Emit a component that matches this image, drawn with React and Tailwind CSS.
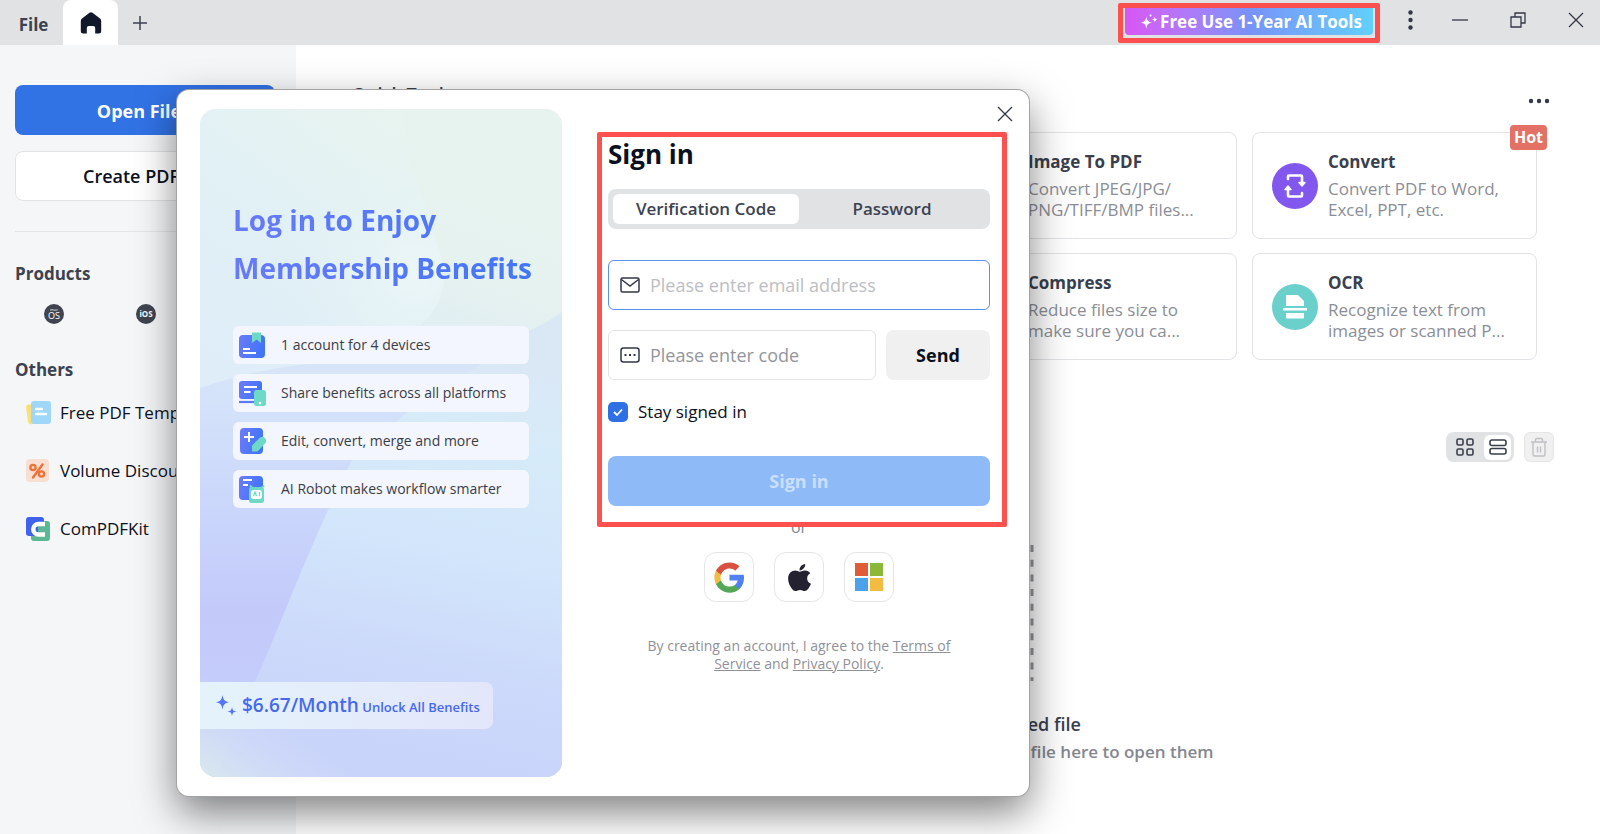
import React from "react";
import { FaApple } from "react-icons/fa";

const CARDS = [
  { title: "Image To PDF", lines: ["Convert JPEG/JPG/", "PNG/TIFF/BMP files..."], place: "col-start-3", tone: "bg-[#4f8df5]", icon: null },
  { title: "Convert", lines: ["Convert PDF to Word,", "Excel, PPT, etc."], place: "col-start-4", tone: "bg-[#8257ee]", icon: ConvertIcon, hot: true },
  { title: "Compress", lines: ["Reduce files size to", "make sure you ca..."], place: "col-start-3", tone: "bg-[#f2a33c]", icon: null },
  { title: "OCR", lines: ["Recognize text from", "images or scanned P..."], place: "col-start-4", tone: "bg-[#69d0cc]", icon: OcrIcon },
];

const OTHERS = [
  { label: "Free PDF Templates", icon: TemplateIcon },
  { label: "Volume Discount", icon: PercentIcon },
  { label: "ComPDFKit", icon: KitIcon },
];

const BENEFITS = [
  { label: "1 account for 4 devices", icon: AccountIcon },
  { label: "Share benefits across all platforms", icon: ShareIcon },
  { label: "Edit, convert, merge and more", icon: EditIcon },
  { label: "AI Robot makes workflow smarter", icon: RobotIcon },
];

function ConvertIcon() {
  return (
    <svg width="26" height="26" viewBox="0 0 26 26" fill="none" stroke="#fff" strokeWidth="2.6" strokeLinejoin="round" strokeLinecap="round">
      <path d="M6 6V3.500a1 1 0 0 1 1-1h12a1 1 0 0 1 1 1V9M20 20v2.500a1 1 0 0 1-1 1H7a1 1 0 0 1-1-1V17" />
      <path d="M17 9.500h6l-3 3.500zM3 16.500h6L6 13z" fill="#fff" strokeWidth="1.500" />
    </svg>
  );
}

function OcrIcon() {
  return (
    <svg width="24" height="24" viewBox="0 0 24 24" fill="#fff">
      <path d="M4 0h11l6 6v5H3V1a1 1 0 0 1 1-1zM0 13h24v2.500H0zM3 18h18v4.500a1 1 0 0 1-1 1H4a1 1 0 0 1-1-1z" />
    </svg>
  );
}

function TemplateIcon() {
  return (
    <svg width="26" height="24" viewBox="0 0 26 24">
      <rect x="2" y="3" width="13" height="20" rx="3" fill="#f9df7b" transform="rotate(-8 8 13)" />
      <rect x="6" y="0" width="20" height="23" rx="3" fill="#9fd7f8" />
      <path d="M11 8h6M11 13h10" stroke="#fff" strokeWidth="2.400" strokeLinecap="round" />
    </svg>
  );
}

function PercentIcon() {
  return (
    <svg width="26" height="24" viewBox="0 0 26 24">
      <rect x="1" y="0" width="23" height="23" rx="4" fill="#f9dfd2" />
      <g fill="none" stroke="#ee7138" strokeWidth="2.400">
        <circle cx="8" cy="8.500" r="2.600" />
        <circle cx="16.500" cy="15" r="2.600" />
        <path d="M17.500 5.500l-9.500 13" strokeLinecap="round" />
      </g>
    </svg>
  );
}

function KitIcon() {
  return (
    <svg width="26" height="24" viewBox="0 0 26 24">
      <rect x="1" y="0" width="18" height="19" rx="3" fill="#3f62ec" />
      <path d="M19 4h3a3 3 0 0 1 3 3v14a3 3 0 0 1-3 3H9a3 3 0 0 1-3-3v-2h13z" fill="#5cb795" />
      <path d="M13 8.500h8v7h-8z" fill="#5cb795" />
      <path d="M20 7h-6.500a5 5 0 0 0 0 10.500H20" fill="none" stroke="#fff" strokeWidth="4.500" />
    </svg>
  );
}

function IconGradient({ id }) {
  return (
    <linearGradient id={id} x1="0" x2="1" y1="0" y2="0.3">
      <stop offset="0" stopColor="#6b7cfa" />
      <stop offset="1" stopColor="#4274f8" />
    </linearGradient>
  );
}

function AccountIcon() {
  return (
    <svg width="28" height="28" viewBox="0 0 28 28">
      <defs><IconGradient id="ga" /></defs>
      <rect x="0" y="4" width="26" height="23" rx="4" fill="url(#ga)" />
      <path d="M13 1.500h9v10.500l-4.500-3.500L13 12z" fill="#6fd9c8" />
      <path d="M4 18h7M4 22h13" stroke="#fff" strokeWidth="1.800" />
    </svg>
  );
}

function ShareIcon() {
  return (
    <svg width="28" height="28" viewBox="0 0 28 28">
      <defs><IconGradient id="gs" /></defs>
      <rect x="0" y="2" width="23" height="18" rx="3" fill="url(#gs)" />
      <path d="M0 23h17" stroke="#5a78fa" strokeWidth="2.200" />
      <path d="M5 8h13M5 13h6.500" stroke="#fff" strokeWidth="1.800" />
      <rect x="15" y="11" width="12" height="16" rx="2.500" fill="#6fd9c8" />
      <circle cx="21" cy="24" r="1.300" fill="#fff" />
    </svg>
  );
}

function EditIcon() {
  return (
    <svg width="28" height="28" viewBox="0 0 28 28">
      <defs><IconGradient id="ge" /></defs>
      <rect x="1" y="1" width="23" height="26" rx="4" fill="url(#ge)" />
      <path d="M10 5v10M5 10h10" stroke="#fff" strokeWidth="2" />
      <path d="M13 18.500l8-8a4 4 0 0 1 5.500 5.500l-8 8.500H13z" fill="#6fd9c8" />
    </svg>
  );
}

function RobotIcon() {
  return (
    <svg width="28" height="28" viewBox="0 0 28 28">
      <defs><IconGradient id="gr" /></defs>
      <rect x="0" y="1" width="24" height="24" rx="4" fill="url(#gr)" />
      <path d="M4 5h9M4 10h5" stroke="#fff" strokeWidth="1.800" />
      <path d="M11 10.500l3 3M25 10.500l-3 3" stroke="#6fd9c8" strokeWidth="1.800" />
      <rect x="10" y="12" width="15" height="16" rx="2.500" fill="#6fd9c8" />
      <rect x="12" y="15" width="11" height="9" rx="3" fill="#fff" />
      <path d="M14.500 21l1.500-4 1.500 4M20.500 17v4" stroke="#6fd9c8" strokeWidth="1.300" fill="none" />
    </svg>
  );
}

function GoogleIcon() {
  return (
    <svg width="33" height="33" viewBox="0 0 24 24">
      <path fill="#4f82f0" d="M22.560 12.250c0-.78-.07-1.530-.2-2.250H12v4.260h5.920c-.26 1.370-1.040 2.530-2.210 3.310v2.770h3.570c2.080-1.920 3.280-4.740 3.280-8.090z" />
      <path fill="#54a757" d="M12 23c2.970 0 5.460-.98 7.280-2.660l-3.570-2.770c-.98.660-2.230 1.060-3.710 1.060-2.860 0-5.290-1.930-6.160-4.530H2.180v2.840C3.990 20.530 7.700 23 12 23z" />
      <path fill="#f2bd42" d="M5.840 14.090c-.22-.66-.35-1.360-.35-2.090s.13-1.430.35-2.090V7.070H2.180C1.430 8.550 1 10.220 1 12s.43 3.450 1.180 4.930l3.660-2.840z" />
      <path fill="#d85140" d="M12 5.380c1.620 0 3.060.56 4.210 1.640l3.150-3.150C17.450 2.090 14.970 1 12 1 7.700 1 3.990 3.470 2.180 7.070l3.660 2.840c.87-2.600 3.300-4.530 6.160-4.530z" />
    </svg>
  );
}

function MicrosoftIcon() {
  return (
    <svg width="28" height="28" viewBox="0 0 28 28">
      <path d="M0 0h13v13H0z" fill="#e05c38" />
      <path d="M15 0h13v13H15z" fill="#8bb839" />
      <path d="M0 15h13v13H0z" fill="#4ba2ea" />
      <path d="M15 15h13v13H15z" fill="#f2bb41" />
    </svg>
  );
}

function CloseIcon() {
  return (
    <svg width="16" height="16" viewBox="0 0 16 16" stroke="#333846" strokeWidth="1.300">
      <path d="M1 1l14 14M15 1L1 15" />
    </svg>
  );
}

function PromoBackground() {
  return (
    <svg className="absolute inset-0 h-full w-full" viewBox="0 0 362 668" preserveAspectRatio="none" aria-hidden="true">
      <defs>
        <linearGradient id="base" x1="0.700" y1="0" x2="0.500" y2="1">
          <stop offset="0" stopColor="#e6f3ee" />
          <stop offset="0.220" stopColor="#e6f2ef" />
          <stop offset="0.380" stopColor="#deecf5" />
          <stop offset="1" stopColor="#ccd6f9" />
        </linearGradient>
        <linearGradient id="leaf" x1="0.900" y1="0" x2="0.300" y2="1">
          <stop offset="0" stopColor="#e8f4ee" />
          <stop offset="0.450" stopColor="#e2f1f4" />
          <stop offset="1" stopColor="#deedf8" />
        </linearGradient>
        <radialGradient id="glow" cx="215" cy="165" r="120" gradientUnits="userSpaceOnUse">
          <stop offset="0" stopColor="#edf7f8" stopOpacity="0.800" />
          <stop offset="1" stopColor="#e6f3f7" stopOpacity="0" />
        </radialGradient>
        <linearGradient id="wave" x1="0" y1="200" x2="0" y2="668" gradientUnits="userSpaceOnUse">
          <stop offset="0" stopColor="#dae7f5" />
          <stop offset="0.180" stopColor="#d5e3fa" />
          <stop offset="0.450" stopColor="#c9d5fb" />
          <stop offset="0.650" stopColor="#c3cafa" />
          <stop offset="0.800" stopColor="#c4ccfa" />
          <stop offset="1" stopColor="#cfdbf7" />
        </linearGradient>
        <linearGradient id="lower" x1="280" y1="250" x2="200" y2="640" gradientUnits="userSpaceOnUse">
          <stop offset="0" stopColor="#dae8f6" />
          <stop offset="0.200" stopColor="#d6ebf9" />
          <stop offset="0.500" stopColor="#d2e5fb" />
          <stop offset="0.800" stopColor="#ccd9fa" />
          <stop offset="1" stopColor="#c9d4fa" />
        </linearGradient>
        <linearGradient id="corner" x1="0" y1="1" x2="0.500" y2="0.500">
          <stop offset="0" stopColor="#d9e8ee" />
          <stop offset="1" stopColor="#d1dcf9" stopOpacity="0" />
        </linearGradient>
      </defs>
      <path d="M0 0h362v668H0z" fill="url(#base)" />
      <path d="M0 0h204c0 45 16 75 29 121 10 35 24 60-13 96L0 300z" fill="url(#leaf)" />
      <path d="M204 0c0 45 16 75 29 121 10 35 24 60-13 96L60 300V60z" fill="url(#glow)" />
      <path d="M0 279c70-24 120-26 190-29 80-4 135-20 172-47v465H0z" fill="url(#wave)" />
      <path d="M362 203c-70 50-130 77-165 109-26 15-37 23-47 43-40 80-65 150-95 218q-15 40-40 95h347z" fill="url(#lower)" />
      <path d="M0 560h160v108H0z" fill="url(#corner)" />
    </svg>
  );
}

function TitleBar() {
  return (
    <header className="flex h-[45px] items-stretch bg-[#e1e2e4] text-[#3d4250]">
      <button className="w-[63px] pt-1 pl-1 text-[17px] font-bold">File</button>
      <button className="grid w-[55px] place-items-center rounded-t-lg bg-white" aria-label="Home">
        <svg width="24" height="24" viewBox="0 0 24 24" fill="#12172a">
          <path d="M10.500 1.800a2.500 2.500 0 0 1 3 0l7.500 5.700a3 3 0 0 1 1.200 2.400V20a2.500 2.500 0 0 1-2.500 2.500h-3.500V17a2 2 0 0 0-2-2h-4.400a2 2 0 0 0-2 2v5.500H4.300A2.500 2.500 0 0 1 1.800 20V9.900A3 3 0 0 1 3 7.500z" />
        </svg>
      </button>
      <button className="grid w-[44px] place-items-center" aria-label="New tab">
        <svg width="14" height="14" viewBox="0 0 14 14" stroke="#3d4250" strokeWidth="1.500"><path d="M7 0v14M0 7h14" /></svg>
      </button>

      <div className="ml-auto flex items-start">
        <div className="mt-[3px] h-10 w-[262px] rounded-xs border-5 border-[#fb504f] px-0.5">
          <button className="flex h-[27px] w-full items-center justify-center gap-0.5 rounded-b-sm bg-linear-to-r from-[#d855f5] via-[#7792f8] via-50% to-[#60d0fb] pl-1 text-[17px] font-bold whitespace-nowrap text-white">
            <svg width="18" height="16" viewBox="0 0 17 15" fill="#fff">
              <path d="M6 2.500c.7 3.700 1.600 4.800 5.500 5.500C7.600 8.700 6.700 9.800 6 14 5.300 9.800 4.400 8.700.5 8 4.400 7.300 5.300 6.200 6 2.500zM14 2.500c.3 1.800.9 2.300 2.800 2.700-1.900.4-2.500.9-2.800 2.800-.3-1.900-.9-2.400-2.800-2.800 1.900-.4 2.500-.9 2.800-2.700z" />
              <circle cx="10" cy="1.300" r="1" />
            </svg>
            Free Use 1-Year AI Tools
          </button>
        </div>
        <div className="flex h-10 items-center pr-4">
          <button className="grid w-15 place-items-center" aria-label="More">
            <svg width="5" height="20" viewBox="0 0 5 20" fill="#333846"><circle cx="2.500" cy="2.500" r="2.200" /><circle cx="2.500" cy="10" r="2.200" /><circle cx="2.500" cy="17.500" r="2.200" /></svg>
          </button>
          <button className="grid w-10 place-items-center" aria-label="Minimize">
            <svg width="16" height="2" viewBox="0 0 16 2"><path d="M0 1h16" stroke="#333846" strokeWidth="1.300" /></svg>
          </button>
          <button className="ml-4.5 grid w-10 place-items-center" aria-label="Restore">
            <svg width="16" height="16" viewBox="0 0 16 16" fill="none" stroke="#333846" strokeWidth="1.300">
              <path d="M1 5h10v10H1zM5 5V1h10v10h-4" />
            </svg>
          </button>
          <button className="ml-[30px] grid w-4 place-items-center" aria-label="Close window"><CloseIcon /></button>
        </div>
      </div>
    </header>
  );
}

function Sidebar() {
  return (
    <aside className="w-[296px] shrink-0 bg-[#f5f6f8] px-[15px] pt-10 text-[#0b1020]">
      <button className="h-[50px] w-[260px] rounded-lg bg-[#3172e5] pt-0.5 pr-3 text-lg font-bold text-white">Open File</button>
      <button className="mt-4 h-[50px] w-[260px] rounded-lg border border-[#e2e3e6] bg-white pr-7 text-lg font-semibold">Create PDF</button>
      <hr className="mt-7.5 border-[#e4e5e8]" />
      <h2 className="mt-7 text-[17px]/7 font-bold text-[#3d4250]">Products</h2>
      <div className="mt-4 flex gap-18 pl-[29px]">
        <svg width="20" height="20" viewBox="0 0 20 20" role="img" aria-label="macOS">
          <circle cx="10" cy="10" r="10" fill="#40444f" />
          <text x="10" y="7" textAnchor="middle" fontSize="4" fill="#fff">mac</text>
          <text x="10" y="15" textAnchor="middle" fontSize="9" fill="#fff">OS</text>
        </svg>
        <svg width="20" height="20" viewBox="0 0 20 20" role="img" aria-label="iOS">
          <circle cx="10" cy="10" r="10" fill="#40444f" />
          <text x="10" y="13" textAnchor="middle" fontSize="8" fontWeight="700" fill="#fff">iOS</text>
        </svg>
      </div>
      <h2 className="mt-8 text-[17px]/7 font-bold text-[#3d4250]">Others</h2>
      <ul className="mt-4 flex flex-col gap-8">
        {OTHERS.map(({ label, icon: Icon }) => (
          <li key={label}>
            <a href="#" className="flex items-center gap-[9px] pl-[10px] text-[17px]/[26px]">
              <Icon />
              {label}
            </a>
          </li>
        ))}
      </ul>
    </aside>
  );
}

function ToolCard({ card }) {
  const Icon = card.icon;
  return (
    <button className={`relative flex h-[107px] items-center gap-[10px] rounded-lg border border-[#e2e3e6] bg-white pl-[19px] text-left ${card.place}`}>
      <span className={`grid h-[46px] w-[46px] shrink-0 place-items-center rounded-full ${card.tone}`}>
        {Icon && <Icon />}
      </span>
      <span className="block whitespace-nowrap">
        <span className="block pb-[5px] text-[17px]/[22px] font-bold text-[#3a3f4d]">{card.title}</span>
        {card.lines.map((line) => (
          <span key={line} className="block text-[17px]/[21px] text-[#8b8e96]">{line}</span>
        ))}
      </span>
      {card.hot && (
        <span className="absolute -top-2 -right-[11px] rounded-sm bg-[#e37165] px-1 text-base/[25px] font-bold text-white">Hot</span>
      )}
    </button>
  );
}

function Main() {
  return (
    <main className="min-w-0 flex-1 pt-10 pr-[46px] pl-[56px]">
      <div className="flex h-[47px] justify-between pr-1">
        <h2 className="text-lg/[18px] font-semibold text-[#3a3f4d]">Quick Tools</h2>
        <button className="mt-3 h-2" aria-label="More tools">
          <svg width="22" height="6" viewBox="0 0 22 6" fill="#333846"><circle cx="3" cy="3" r="2.200" /><circle cx="11" cy="3" r="2.200" /><circle cx="19" cy="3" r="2.200" /></svg>
        </button>
      </div>
      <div className="mr-[17px] grid grid-cols-4 gap-x-[15px] gap-y-[14px]">
        {CARDS.map((card) => <ToolCard key={card.title} card={card} />)}
      </div>
      <div className="mt-[72px] flex justify-end gap-2.5">
        <div className="flex h-[30px] w-[68px] items-center justify-between rounded-lg bg-[#e1e2e4] p-[3px]">
          <button className="grid h-6 w-[31px] place-items-center" aria-label="Grid view">
            <svg width="18" height="18" viewBox="0 0 18 18" fill="none" stroke="#3a3f4d" strokeWidth="1.600">
              <rect x="1" y="1" width="6" height="6" rx="1.500" /><rect x="11" y="1" width="6" height="6" rx="1.500" />
              <rect x="1" y="11" width="6" height="6" rx="1.500" /><rect x="11" y="11" width="6" height="6" rx="1.500" />
            </svg>
          </button>
          <button className="grid h-[25px] w-[27px] place-items-center rounded-md bg-white" aria-label="List view">
            <svg width="18" height="16" viewBox="0 0 18 16" fill="none" stroke="#3a3f4d" strokeWidth="1.600">
              <rect x="1" y="1" width="16" height="5.500" rx="2" /><rect x="1" y="9.500" width="16" height="5.500" rx="2" />
            </svg>
          </button>
        </div>
        <button className="grid h-[30px] w-[30px] place-items-center rounded-md border border-[#e6e6e7] bg-[#f0f0f1]" aria-label="Delete">
          <svg width="18" height="20" viewBox="0 0 18 20" fill="none" stroke="#bfc0c4" strokeWidth="1.400">
            <path d="M1 5h16M3 5v12.500c0 .8.500 1.500 1.500 1.500h9c1 0 1.500-.7 1.500-1.500V5M5.500 5V3c0-1 .5-1.500 1.500-1.500h4c1 0 1.500.5 1.500 1.500v2M7.500 9.500v6M10.500 9.500v6" />
          </svg>
        </button>
      </div>
      <div className="mt-[80px] mr-[17px] flex flex-col items-center">
        <svg width="178" height="142" viewBox="0 0 178 142" fill="none" aria-hidden="true">
          <path d="M176 3v136" stroke="#94969c" strokeWidth="3" strokeDasharray="7 7.700" />
          <path d="M2 141V1h172M2 141h172" stroke="#94969c" strokeWidth="2" strokeDasharray="7 7.700" />
        </svg>
        <p className="mt-[26px] text-lg/7 font-semibold text-[#3a3f4d]">There is no recently opened file</p>
        <p className="text-[17px]/7 font-semibold whitespace-nowrap text-[#85878f]">Click to select any file or drag and drop the file here to open them</p>
      </div>
    </main>
  );
}

function PromoPanel() {
  return (
    <section className="relative flex w-[362px] shrink-0 flex-col overflow-hidden rounded-2xl">
      <PromoBackground />
      <div className="relative flex flex-1 flex-col pt-[87px]">
        <h2 className="w-max bg-linear-to-r from-[#6b7bfa] to-[#4275f8] bg-clip-text pl-[33px] text-[28px]/[48px] font-bold text-transparent">
          Log in to Enjoy<br />Membership Benefits
        </h2>
        <ul className="mx-[33px] mt-[34px] flex flex-col gap-[10px]">
          {BENEFITS.map(({ label, icon: Icon }) => (
            <li key={label} className="flex h-[38px] items-center gap-[14px] rounded-md bg-[#f3f6fe] pl-[6px] text-sm whitespace-nowrap text-[#3b3d45]">
              <Icon />
              {label}
            </li>
          ))}
        </ul>
        <div className="mt-auto mb-[48px] flex h-[47px] w-[293px] items-center gap-[5px] rounded-r-lg bg-linear-to-r from-[#e4f3fb] to-[#e3e6fa] pl-[15px] whitespace-nowrap text-[#4668ee]">
          <svg width="22" height="22" viewBox="0 0 22 22" fill="#5577f5">
            <path d="M7.500 0c.9 5 2.200 6.500 7 7.300-4.800.8-6.100 2.200-7 7.200-.9-5-2.200-6.400-7-7.200C5.300 6.500 6.600 5 7.500 0zM17 12c.5 3 1.300 4 4.500 4.500-3.200.5-4 1.500-4.500 4.500-.5-3-1.300-4-4.500-4.500 3.200-.5 4-1.500 4.500-4.500z" />
          </svg>
          <span className="text-[19px] font-semibold">
            $6.67/Month<span className="text-[13px]"> Unlock All Benefits</span>
          </span>
        </div>
      </div>
    </section>
  );
}

function SignInForm() {
  return (
    <section className="flex w-[410px] flex-col">
      {/* the highlight frame lies over the top of the "or" line */}
      <form className="relative z-10 rounded-xs border-5 border-[#fd5150] pr-3 pb-4 pl-1.5" onSubmit={(e) => e.preventDefault()}>
        <h1 className="text-[26px]/[34px] font-bold text-[#0b1020]">Sign in</h1>
        <div className="mt-4.5 flex h-10 rounded-lg bg-[#e1e2e4] p-[5px] text-[17px] font-semibold text-[#3d4250]">
          <button type="button" className="flex-1 rounded-md bg-white">Verification Code</button>
          <button type="button" className="flex-1">Password</button>
        </div>
        <label className="mt-[31px] flex h-[50px] items-center gap-2.5 rounded-md border border-[#5b92f2] px-[11px]">
          <svg width="20" height="16" viewBox="0 0 20 16" fill="none" stroke="#333846" strokeWidth="1.500" className="shrink-0">
            <rect x="1" y="1" width="18" height="14" rx="1.500" /><path d="M1.500 2.500L10 9l8.500-6.500" />
          </svg>
          <input type="email" aria-label="Email address" placeholder="Please enter email address" className="w-full bg-transparent text-lg outline-none placeholder:text-[#bcbec3]" />
        </label>
        <div className="mt-5 flex gap-2.5">
          <label className="flex h-[50px] flex-1 items-center gap-2.5 rounded-md border border-[#e4e4e7] px-[11px]">
            <svg width="20" height="16" viewBox="0 0 20 16" fill="none" stroke="#333846" strokeWidth="1.500" className="shrink-0">
              <rect x="1" y="1" width="18" height="14" rx="2.500" /><path d="M4.500 8h2M9 8h2M13.500 8h2" strokeWidth="2" />
            </svg>
            <input type="text" aria-label="Verification code" placeholder="Please enter code" className="w-full bg-transparent text-lg outline-none placeholder:text-[#93959c]" />
          </label>
          <button type="button" className="w-26 rounded-lg bg-[#f0f0f0] text-lg font-bold text-[#0b1020]">Send</button>
        </div>
        <label className="mt-5 flex h-6 items-center gap-2.5 text-[17px] text-[#0b1020]">
          <span className="relative h-5 w-5">
            <input type="checkbox" defaultChecked className="block h-5 w-5 appearance-none rounded-[5px] bg-[#2f70e4]" />
            <svg width="20" height="20" viewBox="0 0 20 20" fill="none" stroke="#fff" strokeWidth="1.800" className="pointer-events-none absolute inset-0">
              <path d="M6 10l3 3 5-5.500" />
            </svg>
          </span>
          Stay signed in
        </label>
        <button className="mt-8 h-[50px] w-full rounded-lg bg-[#8fbaf8] text-lg font-bold text-[#cbdffc]">Sign in</button>
      </form>
      <div className="-mt-3 pr-1.5 text-center">
        <p className="text-base/6 text-[#85878f]">or</p>
        <div className="mt-[13px] flex justify-center gap-5">
          <button className="grid h-[50px] w-[50px] place-items-center rounded-xl border border-[#e6e6e8]" aria-label="Google"><GoogleIcon /></button>
          <button className="grid h-[50px] w-[50px] place-items-center rounded-xl border border-[#e6e6e8]" aria-label="Apple"><FaApple size={31} color="#242231" /></button>
          <button className="grid h-[50px] w-[50px] place-items-center rounded-xl border border-[#e6e6e8]" aria-label="Microsoft"><MicrosoftIcon /></button>
        </div>
        <p className="mx-auto mt-[35px] w-[330px] text-sm/[18px] text-[#8f9198]">
          By creating an account, I agree to the <a href="#" className="underline">Terms of Service</a> and <a href="#" className="underline">Privacy Policy</a>.
        </p>
      </div>
    </section>
  );
}

export default function App() {
  return (
    <div className="relative flex min-h-screen flex-col overflow-hidden bg-white font-['Open_Sans','Noto_Sans',sans-serif]">
      <TitleBar />
      <div className="relative flex flex-1 overflow-hidden">
        <Sidebar />
        <Main />
        <div className="absolute inset-0 flex items-start pt-[45px] pl-[177px]">
          <div role="dialog" aria-label="Sign in" className="relative flex h-[706px] w-[852px] rounded-xl bg-white py-[19px] pl-[23px] shadow-[0_0_0_1px_#a3a3a3,0_16px_40px_rgba(0,0,0,0.5)]">
            <PromoPanel />
            <div className="pt-[23px] pl-[35px]">
              <SignInForm />
            </div>
            <button className="absolute top-4 right-4" aria-label="Close"><CloseIcon /></button>
          </div>
        </div>
      </div>
    </div>
  );
}
